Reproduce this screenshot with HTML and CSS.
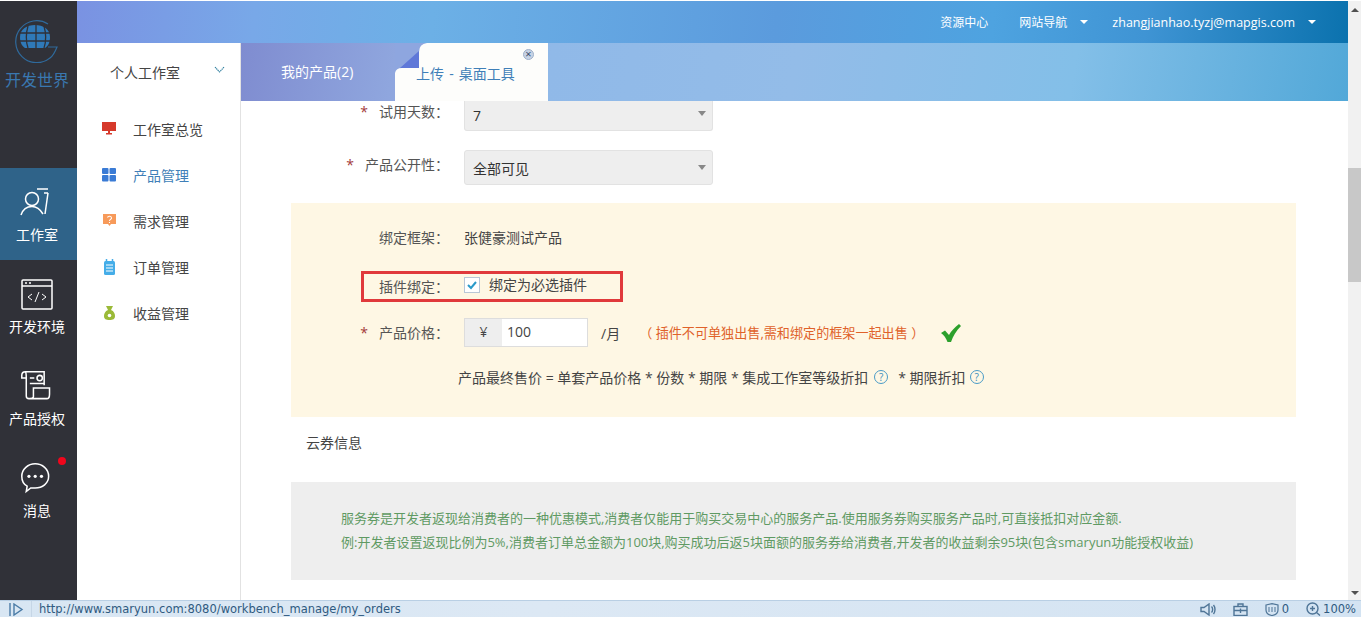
FILE: index.html
```html
<!DOCTYPE html>
<html lang="zh">
<head>
<meta charset="utf-8">
<title>开发世界</title>
<link rel="stylesheet" href="styles.css">
</head>
<body>
<div class="app">
  <div class="main">
    <aside class="rail">
      <div class="logo">
        <svg class="logo-mark" width="44" height="44" viewBox="0 0 44 44">
          <path d="M33 5A21 21 0 1 0 35 39C38 37 40 33 42 28H33" fill="none" stroke="#2f6a9c" stroke-width="1.200"/>
          <path d="M5 18C5 10 12 6 20 6C28 6 35 10 35 18C35 24 33 27 30 29H10C7 27 5 24 5 18Z" fill="#2f79b8"/>
          <path d="M5 14H35M5 22H35M13 7C11 14 11 23 13 29M21 6V29M29 7C31 14 31 23 29 29" fill="none" stroke="#303138" stroke-width="1.300"/>
        </svg>
        <div class="logo-text">开发世界</div>
      </div>
      <a class="rail-item active">
        <svg width="34" height="34" viewBox="0 0 34 34" fill="none" stroke="#fff" stroke-width="1.500">
          <circle cx="12" cy="13" r="6.500"/>
          <path d="M1 29C3 23 7 20.500 12 20.500C16 20.500 20 23 23 28"/>
          <path d="M17 3H28M24 7H28M28 7L25 28"/>
        </svg>
        <span>工作室</span>
      </a>
      <a class="rail-item">
        <svg width="34" height="34" viewBox="0 0 34 34" fill="none" stroke="#fff" stroke-width="1.500">
          <rect x="2" y="2" width="30" height="29" rx="1"/>
          <path d="M2 8H32"/>
          <circle cx="6" cy="5" r="1" fill="#fff" stroke="none"/>
          <circle cx="10" cy="5" r="1" fill="#fff" stroke="none"/>
          <path d="M12 16L8 19L12 22M22 16L26 19L22 22M19 14L15 24" stroke-width="1"/>
        </svg>
        <span>开发环境</span>
      </a>
      <a class="rail-item">
        <svg width="34" height="34" viewBox="0 0 38 38" fill="none" stroke="#fff" stroke-width="1.700">
          <path d="M6 2H27V17M6 2C3 2 2 4 2 6V9H7V29C7 31 8 32 10 32H30C32 32 33 30 33 27V20H15V30C15 31 14 32 11 32M6 2C7 3 7 5 7 9"/>
          <circle cx="22" cy="9" r="3"/>
          <path d="M11 9H16M11 15H27"/>
        </svg>
        <span>产品授权</span>
      </a>
      <a class="rail-item">
        <i class="dot"></i>
        <svg width="34" height="34" viewBox="0 0 38 38" fill="none" stroke="#fff" stroke-width="1.700">
          <path d="M17 2C25 2 32 8 32 16C32 24 25 29 17 29C15 29 14 29 12 29L7 33L8 27C4 25 2 21 2 16C2 8 9 2 17 2Z"/>
          <circle cx="10" cy="16" r="1.800" fill="#fff" stroke="none"/>
          <circle cx="17" cy="16" r="1.800" fill="#fff" stroke="none"/>
          <circle cx="24" cy="16" r="1.800" fill="#fff" stroke="none"/>
        </svg>
        <span>消息</span>
      </a>
    </aside>
    <div class="page">
      <header class="topbar">
        <a>资源中心</a>
        <a class="caret-link">网站导航<i class="caret"></i></a>
        <a class="caret-link mail">zhangjianhao.tyzj@mapgis.com<i class="caret"></i></a>
      </header>
      <div class="below">
        <nav class="side">
          <div class="side-head">
            <span>个人工作室</span>
            <svg width="11" height="8" viewBox="0 0 11 8" fill="none" stroke="#2f7f9f" stroke-width="1.100" stroke-dasharray="1.400 .6"><path d="M1 1L5.500 6L10 1"/></svg>
          </div>
          <ul class="side-list">
            <li>
              <svg width="15" height="14" viewBox="0 0 15 14"><path d="M0 0H14V9H8V11H10V12.500H4V11H6V9H0Z" fill="#d6392b"/></svg>
              工作室总览
            </li>
            <li class="current">
              <svg width="15" height="14" viewBox="0 0 15 14" fill="#3a7bd5"><rect y="0" width="6.500" height="6" rx="1"/><rect x="7.500" y="0" width="6.500" height="6" rx="1"/><rect y="7" width="6.500" height="6.500" rx="1"/><rect x="7.500" y="7" width="6.500" height="6.500" rx="1"/></svg>
              产品管理
            </li>
            <li>
              <svg width="15" height="14" viewBox="0 0 15 14"><path d="M1 0H14V10H9L7.500 12L6 10H1Z" fill="#f79a5a"/><path d="M5.500 3.500C6 1.800 9.500 1.800 9.500 4C9.500 5.500 7.500 5.300 7.500 7M7.500 8V9" stroke="#fff" stroke-width="1.100" fill="none"/></svg>
              需求管理
            </li>
            <li>
              <svg width="15" height="16" viewBox="0 0 15 16"><rect x="2" y="2" width="11" height="14" rx="1.500" fill="#45ade8"/><path d="M4.500 0V3M10.500 0V3" stroke="#45ade8" stroke-width="1.500"/><path d="M4 6H11M4 9H11M4 12H11" stroke="#fff"/></svg>
              订单管理
            </li>
            <li>
              <svg width="15" height="14" viewBox="0 0 15 14"><path d="M4 0H11L9 4C12 5 13 8 13 10C13 13 11 14 7.500 14C4 14 2 13 2 10C2 8 3 5 6 4Z" fill="#9bba38"/><circle cx="7.500" cy="9.500" r="1.800" fill="#fff"/></svg>
              收益管理
            </li>
          </ul>
        </nav>
        <section class="work">
          <div class="tabs">
            <div class="tab">我的产品(2)</div>
            <div class="tab open">
              <svg class="fold" width="34" height="30" viewBox="0 0 34 30">
                <path d="M0 0H32Q24 1 24 9V25H7Q1 25 0 30Z" fill="#8ea6df"/>
                <path d="M5 25L24 8V25Z" fill="#5f78d8"/>
              </svg>
              <span class="tab-label">上传 - 桌面工具</span>
              <i class="close">×</i>
            </div>
          </div>
          <div class="content">
            <div class="row first">
              <label class="label"><em>*</em>试用天数：</label>
              <div class="select short">7<i class="arrow"></i></div>
            </div>
            <div class="row second">
              <label class="label"><em>*</em>产品公开性：</label>
              <div class="select tall">全部可见<i class="arrow"></i></div>
            </div>
            <div class="panel">
              <div class="row bound">
                <label class="label">绑定框架：</label>
                <span class="value">张健豪测试产品</span>
              </div>
              <div class="highlight">
                <label class="label">插件绑定：</label>
                <span class="check"><svg width="12" height="12" viewBox="0 0 12 12" fill="none" stroke="#2a9ac9" stroke-width="2"><path d="M2 6L5 9L10 3"/></svg></span>
                <span class="check-text">绑定为必选插件</span>
              </div>
              <div class="row price">
                <label class="label"><em>*</em>产品价格：</label>
                <div class="group">
                  <span class="addon">¥</span>
                  <span class="input">100</span>
                </div>
                <span class="unit">/月</span>
                <span class="note">（ 插件不可单独出售,需和绑定的框架一起出售 ）</span>
                <svg class="ok" width="20" height="18" viewBox="0 0 20 18"><path d="M0 9L4 6.500L8 11C10 7 14 3 18 0L20 2C15 7 12 12 10 18H6.500C5 14 3 11 0 9Z" fill="#2ca02c"/></svg>
              </div>
              <div class="formula">
                产品最终售价 = 单套产品价格 * 份数 * 期限 * 集成工作室等级折扣
                <i class="help">?</i>
                <span>* 期限折扣</span>
                <i class="help">?</i>
              </div>
            </div>
            <h3 class="coupon-title">云券信息</h3>
            <div class="coupon">
              <p>服务券是开发者返现给消费者的一种优惠模式,消费者仅能用于购买交易中心的服务产品.使用服务券购买服务产品时,可直接抵扣对应金额.</p>
              <p>例:开发者设置返现比例为5%,消费者订单总金额为100块,购买成功后返5块面额的服务券给消费者,开发者的收益剩余95块(包含smaryun功能授权收益)</p>
            </div>
          </div>
        </section>
      </div>
    </div>
    <div class="scrollbar">
      <i class="up"></i>
      <div class="thumb"></div>
      <i class="down"></i>
    </div>
  </div>
  <footer class="status">
    <svg class="play" width="16" height="13" viewBox="0 0 16 13" fill="none" stroke="#4a7ba6" stroke-width="1.400"><path d="M2 0V13M6 1L14 6.500L6 12Z"/></svg>
    <span class="url">http://www.smaryun.com:8080/workbench_manage/my_orders</span>
    <div class="status-right">
      <svg width="16" height="13" viewBox="0 0 16 13" fill="none" stroke="#4f7597" stroke-width="1.400"><path d="M1 4.500H4L9 1V12L4 8.500H1Z"/><path d="M11.500 3.500C13 5 13 8 11.500 9.500M13.500 2C15.500 4.500 15.500 8.500 13.500 11"/></svg>
      <svg width="15" height="13" viewBox="0 0 15 13" fill="none" stroke="#4f7597" stroke-width="1.400"><rect x="1" y="3.500" width="13" height="9"/><path d="M5 3.500V1H10V3.500M1 7.500H14M7.500 5.500V10"/></svg>
      <span class="shield">
        <svg width="14" height="13" viewBox="0 0 14 13" fill="none" stroke="#4f7597" stroke-width="1.200"><path d="M1 2L7 .7L13 2V7C13 10 10 12 7 12.500C4 12 1 10 1 7Z"/><path d="M4 4V9M7 4V9M10 4V9" stroke-width="1"/></svg>
        0
      </span>
      <span class="zoom-level">
        <svg width="15" height="14" viewBox="0 0 15 14" fill="none" stroke="#4f7597" stroke-width="1.400"><circle cx="6.500" cy="6.500" r="5.500"/><path d="M4 6.500H9M6.500 4V9M10.500 10.500L14 13.500"/></svg>
        100%
      </span>
    </div>
  </footer>
</div>
</body>
</html>
```

FILE: styles.css
```css
* { box-sizing: border-box; }
html, body { margin: 0; height: 100%; overflow: hidden; }
body { font-family: "Open Sans", "Noto Sans CJK SC", sans-serif; font-size: 14px; color: #444; background: #fff; }
i, em { font-style: normal; }
ul { list-style: none; margin: 0; padding: 0; }
p, h3 { margin: 0; font-weight: 400; }

.app { display: flex; flex-direction: column; height: 617px; padding-top: 1px; }
.main { flex: 1; display: flex; min-height: 0; }

.rail { width: 77px; flex: none; background: #303138; color: #fff; display: flex; flex-direction: column; }
.logo { height: 167px; display: flex; flex-direction: column; align-items: center; padding: 18px 3px 0 0; }
.logo-text { color: #3a78b0; font-size: 16px; line-height: 22px; margin-top: 6px; white-space: nowrap; }
.rail-item { position: relative; height: 92px; display: flex; flex-direction: column; align-items: center; padding: 18px 3px 0 0; font-size: 14px; line-height: 20px; gap: 5px; }
.rail-item.active { background: #2f6389; }
.dot { position: absolute; top: 13px; left: 58px; width: 8px; height: 8px; border-radius: 50%; background: #f0061c; }

.page { flex: 1; min-width: 0; display: flex; flex-direction: column; }
.topbar { height: 42px; flex: none; display: flex; justify-content: flex-end; align-items: center; gap: 31px; padding-right: 32px; color: #fff; font-size: 12px; background: linear-gradient(95deg, #7a92e2 0%, #78a8e8 14%, #6cb0e6 28%, #5b9bdd 55%, #4ea3e0 72%, #3f94d4 84%, #0b72ae 100%); }
.caret-link { display: flex; align-items: center; gap: 13px; }
.caret { width: 0; height: 0; border: 4px solid transparent; border-top: 4px solid #fff; border-bottom: 0; }
.mail { font-size: 12.500px; margin-left: -7px; }

.below { flex: 1; min-height: 0; display: flex; }
.side { width: 164px; flex: none; border-right: 1px solid #e2e2e2; background: #fff; }
.side-head { height: 58px; display: flex; align-items: center; padding-left: 33px; gap: 34px; color: #444; }
.side-head svg { margin-top: -4px; }
.side-list { padding-top: 5px; }
.side-list li { height: 46px; display: flex; align-items: center; padding-left: 25px; gap: 16px; color: #444; }
.side-list svg { flex: none; }
.side-list .current { color: #3f7fb8; }

.work { flex: 1; min-width: 0; display: flex; flex-direction: column; }
.tabs { height: 58px; flex: none; display: flex; background: linear-gradient(100deg, #7f8cd0 0%, #8fa6de 14%, #90b9e8 28%, #93bce8 50%, #83bfe8 75%, #52a8d8 100%); color: #fff; font-size: 14px; }
.tab { position: relative; width: 154px; display: flex; align-items: center; padding: 0 0 2px 40px; }
.tab.open { background: #fdfdfb; color: #3f7fb8; padding: 2px 0 0 21px; width: 153px; }
.tab-label { word-spacing: 1.500px; }
.fold { position: absolute; top: 0; left: 0; }
.close { position: absolute; top: 6px; right: 14px; width: 11px; height: 11px; border-radius: 50%; background: #c7d3e6; border: 1px solid #9fb0c8; color: #3a4c66; font-size: 11px; line-height: 8px; text-align: center; }

.content { flex: 1; min-height: 0; overflow: hidden; padding: 0 52px 0 50px; background: #fff; }
.row { display: flex; align-items: center; }
.label { width: 158px; flex: none; margin-right: 15px; text-align: right; color: #555; white-space: nowrap; }
.label em { color: #a33a3a; margin-right: 11px; }
.first { align-items: flex-start; height: 30px; }
.first .label { margin-top: 1px; line-height: 20px; }
.second { margin: 19px 0 18px; }
.second .label { margin-top: -7px; }
.select { position: relative; width: 249px; background: #eee; border: 1px solid #e2e2e2; border-radius: 3px; color: #333; padding-left: 8px; display: flex; align-items: center; }
.short { height: 30px; border-top: 0; border-radius: 0 0 3px 3px; }
.tall { height: 35px; }
.arrow { position: absolute; right: 6px; width: 0; height: 0; border: 4px solid transparent; border-top: 5px solid #888; border-bottom: 0; }
.short .arrow { top: 10px; }
.tall .arrow { top: 14px; }

.panel { background: #fef7e4; height: 214px; padding-top: 20px; }
.bound { height: 28px; margin-bottom: 20px; }
.value { color: #444; }
.highlight { display: flex; align-items: center; width: 262px; height: 31px; margin-left: 70px; border: 3px solid #e0393b; padding-bottom: 3px; }
.highlight .label { width: 85px; margin-right: 15px; margin-top: 1px; }
.check { width: 16px; height: 16px; border: 1px solid #b9c7d6; background: #fff; display: flex; align-items: center; justify-content: center; margin: 0 9px 0 0; }
.check-text { color: #444; margin-top: -3px; }
.price { height: 29px; margin-top: 16px; }
.price .label { margin-top: -2px; }
.group { display: flex; height: 29px; border: 1px solid #ddd; width: 124px; }
.addon { width: 37px; background: #eee; text-align: center; color: #444; line-height: 26px; }
.input { flex: 1; background: #fff; padding-left: 5px; color: #444; line-height: 26px; }
.unit { margin-left: 13px; color: #444; }
.note { margin-left: 19px; color: #e0622a; font-size: 13.100px; white-space: nowrap; }
.ok { margin-left: 17px; }
.formula { margin: 17px 0 0 167px; height: 26px; display: flex; align-items: center; color: #444; font-size: 14px; white-space: nowrap; }
.help { width: 14px; height: 14px; border: 1px solid #4a9bc7; border-radius: 50%; color: #3a8cbb; font-size: 10px; line-height: 12px; text-align: center; margin: 0 6px; }
.formula span { margin: 0 -2px 0 4px; }

.coupon-title { font-size: 14px; line-height: 20px; margin: 16px 0 29px 15px; color: #444; }
.coupon { background: #eee; height: 98px; padding: 24px 50px; color: #5f9a63; font-size: 13px; line-height: 24px; white-space: nowrap; }

.scrollbar { width: 13px; flex: none; background: #f1f1f1; display: flex; flex-direction: column; align-items: center; }
.up { margin-top: 7px; width: 0; height: 0; border: 4px solid transparent; border-bottom: 4px solid #505050; border-top: 0; }
.thumb { width: 13px; height: 114px; margin-top: 156px; background: #c8c8c8; }
.down { margin-top: auto; margin-bottom: 5px; width: 0; height: 0; border: 4px solid transparent; border-top: 4px solid #505050; border-bottom: 0; }

.status { height: 17px; flex: none; display: flex; align-items: center; border-top: 1px solid #b9cfe4; background: linear-gradient(90deg, #d8e6f3, #dce8f4 40%, #d3e3f2); color: #2f5a80; font-size: 11.500px; }
.play { margin-left: 8px; flex: none; }
.url { margin-left: 7px; padding-left: 7px; border-left: 1px solid #c6d6e6; line-height: 16px; font-family: "DejaVu Sans", sans-serif; font-size: 11.500px; white-space: nowrap; }
.status-right { margin-left: auto; padding-right: 5px; display: flex; align-items: center; gap: 17px; font-family: "DejaVu Sans", sans-serif; }
.shield { display: flex; align-items: center; gap: 3px; }
.zoom-level { display: flex; align-items: center; gap: 2px; }
```
